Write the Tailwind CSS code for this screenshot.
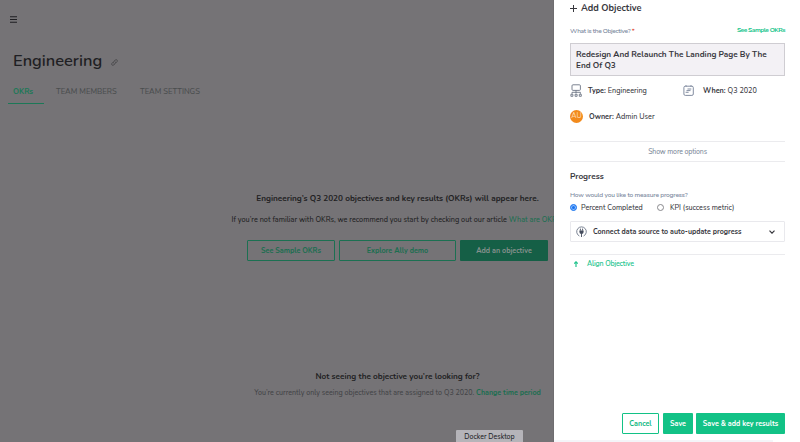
<!DOCTYPE html>
<html lang="en">
<head>
<meta charset="utf-8">
<title>Add Objective</title>
<script src="https://cdn.jsdelivr.net/npm/@tailwindcss/browser@4"></script>
</head>
<body class="relative h-[442px] w-[800px] overflow-hidden bg-[#757376] font-[Nunito,Lato,sans-serif] text-[7.15px] leading-[10px] font-medium whitespace-nowrap text-[#1f1f23]">
  <main class="flex h-full flex-col">
    <header class="px-[10px] pt-4">
      <svg class="h-[7px] w-[7px]" viewBox="0 0 7 7" stroke="#1f1f23" stroke-width="1.1"><path d="M0 .8h7M0 3.5h7M0 6.2h7"/></svg>
    </header>
    <div class="mt-[26px] flex h-6 items-center gap-[9px] pl-[13px]">
      <h1 class="text-[16.4px] leading-6 font-semibold">Engineering</h1>
      <svg class="mt-[2px] h-[7px] w-[7px]" viewBox="0 0 7 7" fill="none" stroke="#434345" stroke-width=".8" stroke-linecap="round"><path d="M2.8 4.3 C2 3.6 2.4 2.9 3 2.3 L4.2 1 C5.4 0 7 1.3 6.1 2.6 L5.3 3.5M4.2 2.7 C5 3.4 4.6 4.1 4 4.7 L2.8 6 C1.6 7 0 5.7 .9 4.4 L1.7 3.5"/></svg>
    </div>
    <nav class="mt-[13px] flex h-[18px] pl-2 text-[7.7px] text-[#4a4d4e]">
      <span class="w-9 border-b border-[#1c7857] pt-[1px] pl-[5px] font-bold text-[#1c7857]">OKRs</span>
      <span class="ml-3 w-[84px] pt-[1px]">TEAM MEMBERS</span>
      <span class="pt-[1px]">TEAM SETTINGS</span>
    </nav>
    <section class="mt-[89px] flex flex-col items-center pr-[5px]">
      <h2 class="text-[8.2px] leading-[12px] font-bold">Engineering’s Q3 2020 objectives and key results (OKRs) will appear here.</h2>
      <p class="mt-[10px] text-[7.25px]">If you’re not familiar with OKRs, we recommend you start by checking out our article <span class="text-[#1b6e50]">What are OKRs?</span></p>
      <div class="mt-[15px] flex h-[21px] gap-1 font-bold text-[#1b6e50]">
        <button class="w-[88px] rounded-[1px] border border-[#1c7052]">See Sample OKRs</button>
        <button class="w-[117px] rounded-[1px] border border-[#1c7052]">Explore Ally demo</button>
        <button class="w-[88px] rounded-[1px] bg-[#155f46] text-[#86918d]">Add an objective</button>
      </div>
    </section>
    <section class="mt-[110px] flex flex-col items-center pr-[5px]">
      <h2 class="text-[8.17px] leading-[12px] font-bold">Not seeing the objective you’re looking for?</h2>
      <p class="mt-[5px] text-[7.1px] text-[#434447]">You’re currently only seeing objectives that are assigned to Q3 2020. <span class="font-bold text-[#1b6e50]">Change time period</span></p>
    </section>
  </main>

  <div class="absolute bottom-0 left-[456px] h-3 w-[67px] rounded-t-[1px] bg-[#b5b4b9] text-center text-[7px] leading-[13px] text-[#242427]">Docker Desktop</div>

  <aside class="absolute inset-y-0 right-0 flex w-[246px] flex-col bg-white pr-[15px] pl-4 text-[#38383e] shadow-[0_0_1px_#555]">
    <h2 class="mt-[2px] flex h-3 items-center gap-1 text-[9.2px] font-bold"><svg class="h-[7px] w-[7px]" viewBox="0 0 7 7" stroke="#38383e"><path d="M0 3.5h7M3.5 0v7"/></svg>Add Objective</h2>
    <div class="mt-[11px] flex h-[18px] justify-between">
      <label class="pt-[1px] text-[6.6px] tracking-[-0.33px] text-[#76849a]">What is the Objective? <span class="font-bold text-[#e34a38]">*</span></label>
      <a class="text-[6.6px] font-bold tracking-[-0.48px] text-[#20c58c]">See Sample OKRs</a>
    </div>
    <div class="h-[33px] border border-[#cfcdd2] bg-[#f3f1f5] px-[5px] pt-[5px] text-[8.2px] leading-[11px] font-bold">Redesign And Relaunch The Landing Page By The<br>End Of Q3</div>
    <div class="mt-2 grid h-[12px] grid-cols-[113px_1fr] text-[7.25px]">
      <div class="flex items-center gap-[6px]">
        <svg class="h-[13px] w-3" viewBox="0 0 12 13" fill="none" stroke="#6d7585" stroke-width=".9"><rect x="2" y=".8" width="8.4" height="5.6" rx="1"/><path d="M6 6.4v3M2 9.8V8.3h8.4v1.5"/><path d="M.9 12.3v-2h2v2zM5.1 12.3v-2h2v2zM9.3 12.3v-2h2v2z"/></svg>
        <p><b>Type:</b> Engineering</p>
      </div>
      <div class="flex items-center gap-[9px]">
        <svg class="h-[11px] w-[11px]" viewBox="0 0 11 11" fill="none" stroke="#758096" stroke-width=".9"><rect x=".9" y="1.2" width="9.4" height="9.2" rx="1.4"/><path d="M3 .2v1.5M8 .2v1.5M4.5 4h3.8M3.5 5.6h4M2.6 7.3h3"/></svg>
        <p><b>When:</b> Q3 2020</p>
      </div>
    </div>
    <div class="mt-[14px] flex h-[13px] items-center gap-[6px]">
      <span class="h-[13px] w-[13px] rounded-full bg-[#f28a1c] text-center leading-[13px] text-[#ffd9ad]">AU</span>
      <p class="text-[7.25px]"><b>Owner:</b> Admin User</p>
    </div>
    <div class="mt-[18px] flex h-[21px] items-center justify-center border-y border-[#ebebee] text-[7px] tracking-[-0.16px] text-[#808b9b]">Show more options</div>
    <h3 class="mt-[9px] text-[8.2px] leading-[12px] font-bold">Progress</h3>
    <p class="mt-[7px] text-[6.6px] tracking-[-0.19px] text-[#76849a]">How would you like to measure progress?</p>
    <div class="mt-[3px] flex h-[9px] items-center">
      <span class="mb-[1px] h-[7px] w-[7px] rounded-full border border-[#2a7ff0] bg-[#1471ee] shadow-[inset_0_0_0_1px_#8fbfff]"></span><span class="ml-[4px] w-[76px]">Percent Completed</span>
      <span class="mb-[1px] h-[7px] w-[7px] rounded-full border border-[#88888c]"></span><span class="ml-[6px]">KPI (success metric)</span>
    </div>
    <div class="mt-[9px] flex h-[21px] items-center rounded-[1px] border border-[#e9e9ed] pr-[9px] pl-[5px]">
      <svg class="h-[11px] w-[11px]" viewBox="0 0 11 11" fill="none" stroke="#6a7486" stroke-width=".9"><path d="M3.4 10A4.8 4.8 0 1 1 7.6 10"/><path d="M3.4 4.4h4.2V6a2.1 2.1 0 0 1-4.2 0z" fill="#454d5d" stroke="none"/><path d="M4.4 2.6v2M6.6 2.6v2M5.5 7.5V11" stroke="#454d5d"/></svg>
      <b class="ml-[6px] text-[7.05px]">Connect data source to auto-update progress</b>
      <svg class="ml-auto h-[4px] w-[6px]" viewBox="0 0 6 4" fill="none" stroke="#38383e" stroke-width="1.2"><path d="M.5.7 3 3.2 5.5.7"/></svg>
    </div>
    <div class="mt-3 flex border-t border-[#ebebee] pt-1 pl-1 text-[#23c48e]">
      <svg class="mt-[2px] h-[6px] w-1" viewBox="0 0 4 6" fill="none" stroke="#23c48e" stroke-width="1.2"><path d="M2 6V.8M.2 2.6 2 .8l1.8 1.8"/></svg>
      <span class="ml-[9px] text-[7px] font-semibold tracking-[-0.15px]">Align Objective</span>
    </div>
    <footer class="mt-auto mb-[6px] flex h-[21px] justify-end gap-[3px] font-bold text-white">
      <button class="w-[37px] rounded-[1px] border border-[#12c286] text-[#12b87f]">Cancel</button>
      <button class="ml-[1px] w-[30px] rounded-[1px] bg-[#12c286]">Save</button>
      <button class="w-[89px] rounded-[1px] bg-[#12c286]">Save &amp; add key results</button>
    </footer>
    <div class="-ml-4 h-[2px] w-[219px] bg-[#f4f4f8]"></div>
  </aside>
</body>
</html>
